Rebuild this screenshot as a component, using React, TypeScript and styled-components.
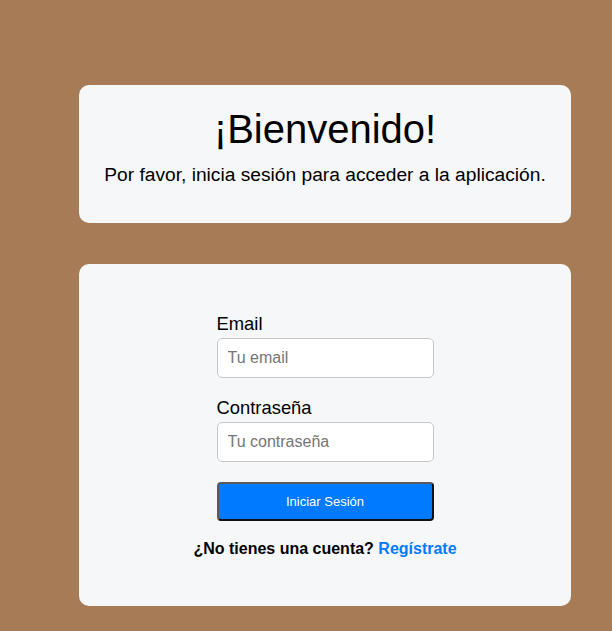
import React from "react";
import styled, { createGlobalStyle } from "styled-components";

const GlobalStyle = createGlobalStyle`
  html, body {
    margin: 0;
    padding: 0;
    background: #a67b55;
    font-family: "Liberation Sans", Arial, sans-serif;
  }
  * { box-sizing: border-box; }
`;

const Page = styled.div`
  min-height: 631px;
  padding: 85px 41px 0 79px;
  display: flex;
  flex-direction: column;
  gap: 41px;
`;

const Card = styled.section<{ $height: number }>`
  width: 492px;
  height: ${(p) => p.$height}px;
  background: #f6f7f9;
  border-radius: 10px;
  display: flex;
  flex-direction: column;
  align-items: center;
`;

const Title = styled.h1`
  margin: 22px 0 0;
  font-size: 40px;
  font-weight: 400;
  color: #000;
  line-height: 45px;
`;

const Subtitle = styled.p`
  margin: 12px 0 0;
  font-size: 19.2px;
  color: #000;
  line-height: 22px;
`;

const Form = styled.form`
  width: 217px;
  margin-top: 49px;
  display: flex;
  flex-direction: column;
`;

const Label = styled.label<{ $top: number }>`
  display: block;
  margin-top: ${(p) => p.$top}px;
  font-size: 18.4px;
  line-height: 21px;
  color: #000;
`;

const Input = styled.input`
  margin-top: 4px;
  width: 217px;
  height: 40px;
  border: 1px solid #c8c8c8;
  border-radius: 5px;
  background: #fff;
  padding: 0 10px;
  font-family: "Liberation Sans", Arial, sans-serif;
  font-size: 16px;
  color: #000;
  outline: none;
  &::placeholder {
    color: #757575;
  }
`;

const Button = styled.button`
  margin-top: 20px;
  width: 217px;
  height: 39px;
  background: #007bff;
  color: #fff;
  border: 2px solid;
  border-color: #5a5a5a #111 #111 #5a5a5a;
  border-radius: 4px;
  font-family: "Liberation Sans", Arial, sans-serif;
  font-size: 13px;
  cursor: pointer;
`;

const Footer = styled.p`
  align-self: center;
  margin: 19px 0 0;
  font-size: 16px;
  font-weight: 700;
  line-height: 18px;
  color: #000;
  text-align: center;
  white-space: nowrap;
`;

const Link = styled.a`
  color: #007bff;
  text-decoration: none;
`;

export default function App() {
  return (
    <>
      <GlobalStyle />
      <Page>
        <Card $height={138}>
          <Title>¡Bienvenido!</Title>
          <Subtitle>Por favor, inicia sesión para acceder a la aplicación.</Subtitle>
        </Card>
        <Card $height={342}>
          <Form onSubmit={(e) => e.preventDefault()}>
            <Label $top={0} htmlFor="email">Email</Label>
            <Input id="email" type="email" placeholder="Tu email" />
            <Label $top={19} htmlFor="password">Contraseña</Label>
            <Input id="password" type="password" placeholder="Tu contraseña" />
            <Button type="submit">Iniciar Sesión</Button>
            <Footer>
              ¿No tienes una cuenta? <Link href="#">Regístrate</Link>
            </Footer>
          </Form>
        </Card>
      </Page>
    </>
  );
}
